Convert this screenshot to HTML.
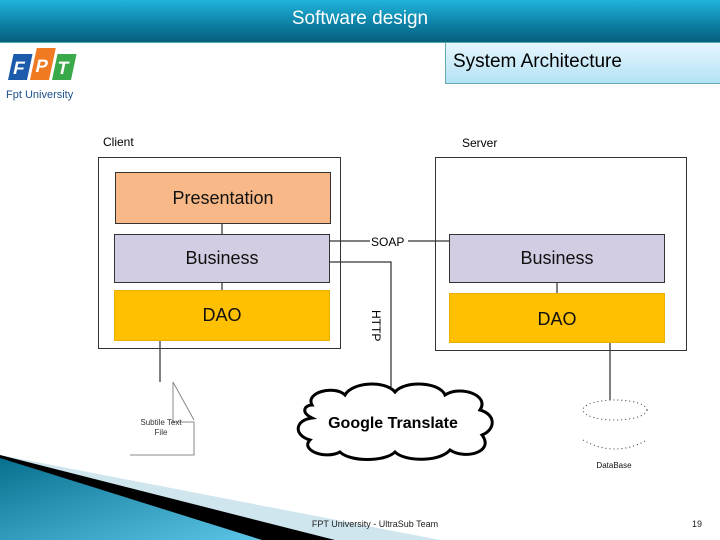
<!DOCTYPE html>
<html><head><meta charset="utf-8"><style>
body{margin:0;width:720px;height:540px;overflow:hidden;background:#fff;font-family:"Liberation Sans",sans-serif;position:relative}
.hdr{position:absolute;left:0;top:0;width:720px;height:42px;background:linear-gradient(#22b4dc,#0b7ea2 60%,#075f7c);border-bottom:1px solid #5aa;color:#fff;font-size:19px;text-align:center;line-height:38px}
.sub{position:absolute;left:445px;top:43px;width:275px;height:41px;background:linear-gradient(#e6f6fd,#b4e2f6);border-left:1px solid #6aa;border-bottom:1px solid #6aa;box-sizing:border-box;font-size:19px;padding-left:7px;line-height:37px;color:#000}
.b{position:absolute;border:1px solid #333;box-sizing:border-box;text-align:center;font-size:18px;color:#111}
</style></head><body>
<div class="hdr">Software design</div>
<div class="sub">System Architecture</div>
<svg style="position:absolute;left:0;top:0" width="720" height="540">
<g transform="translate(0,80) skewX(-12)">
<rect x="8" y="-26" width="19" height="26" fill="#1c5bab"/>
<rect x="30" y="-32" width="19" height="32" fill="#f07a22"/>
<rect x="52" y="-26" width="19" height="26" fill="#39a94a"/>
<text x="11" y="-6" fill="#fff" font-weight="bold" font-size="18">F</text>
<text x="33" y="-8" fill="#fff" font-weight="bold" font-size="18">P</text>
<text x="55" y="-6" fill="#fff" font-weight="bold" font-size="18">T</text>
</g>
<text x="6" y="98" fill="#1c4f8a" font-size="11">Fpt University</text>
<polygon points="0,455 440,540 0,540" fill="#cfe6ef"/>
<polygon points="0,455 335,540 0,540" fill="#000"/>
<defs><linearGradient id="g" x1="0" y1="0" x2="1" y2="1"><stop offset="0" stop-color="#08708f"/><stop offset="1" stop-color="#5cc4e6"/></linearGradient></defs>
<polygon points="0,458 262,540 0,540" fill="url(#g)"/>
<g stroke="#000" fill="none" stroke-width="1">
<line x1="330" y1="241" x2="370" y2="241"/><line x1="408" y1="241" x2="449" y2="241"/>
<polyline points="330,262 391,262 391,388"/>
<line x1="160" y1="341" x2="160" y2="382"/>
<line x1="610" y1="343" x2="610" y2="400"/>
<line x1="222" y1="224" x2="222" y2="234"/><line x1="222" y1="283" x2="222" y2="290"/>
<line x1="557" y1="283" x2="557" y2="293"/>
</g>
<g stroke="#888" fill="none">
<polyline points="173,382 173,422 194,422 194,455 130,455"/>
<line x1="173" y1="382" x2="194" y2="420"/>
<ellipse cx="615" cy="410" rx="32" ry="10" stroke-dasharray="1,3" stroke="#333"/>
<path d="M583,440 Q615,458 647,440" stroke-dasharray="1,3" stroke="#333"/>
</g>
<path d="M312,405 C305,392 335,385 345,395 C352,382 385,380 395,392 C405,380 440,382 445,395 C460,385 490,395 480,410 C497,415 495,430 482,435 C495,452 465,460 450,450 C440,462 405,462 395,452 C385,462 350,462 340,452 C325,460 300,450 310,440 C293,435 295,420 312,418 C300,412 305,405 312,405 Z" fill="#fff" stroke="#000" stroke-width="3"/>
<text x="393" y="428" text-anchor="middle" font-weight="bold" font-size="16">Google Translate</text>
<text x="371" y="246" font-size="12">SOAP</text>
<text transform="translate(372,310) rotate(90)" font-size="12">HTTP</text>
<text x="161" y="425" text-anchor="middle" font-size="8" fill="#333">Subtile Text</text>
<text x="161" y="435" text-anchor="middle" font-size="8" fill="#333">File</text>
<text x="614" y="468" text-anchor="middle" font-size="8" fill="#111">DataBase</text>
<text x="103" y="146" font-size="12">Client</text>
<text x="462" y="147" font-size="12">Server</text>
<text x="375" y="527" text-anchor="middle" font-size="9" fill="#222">FPT University - UltraSub Team</text>
<text x="697" y="527" text-anchor="middle" font-size="9" fill="#222">19</text>
</svg>
<div class="b" style="left:98px;top:157px;width:243px;height:192px"></div>
<div class="b" style="left:435px;top:157px;width:252px;height:194px"></div>
<div class="b" style="left:115px;top:172px;width:216px;height:52px;background:#f8b887;line-height:50px">Presentation</div>
<div class="b" style="left:114px;top:234px;width:216px;height:49px;background:#d3cde3;line-height:47px">Business</div>
<div class="b" style="left:114px;top:290px;width:216px;height:51px;background:#fec000;border-color:#e9b000;line-height:48px">DAO</div>
<div class="b" style="left:449px;top:234px;width:216px;height:49px;background:#d3cde3;line-height:47px">Business</div>
<div class="b" style="left:449px;top:293px;width:216px;height:50px;background:#fec000;border-color:#e9b000;line-height:50px">DAO</div>
</body></html>
